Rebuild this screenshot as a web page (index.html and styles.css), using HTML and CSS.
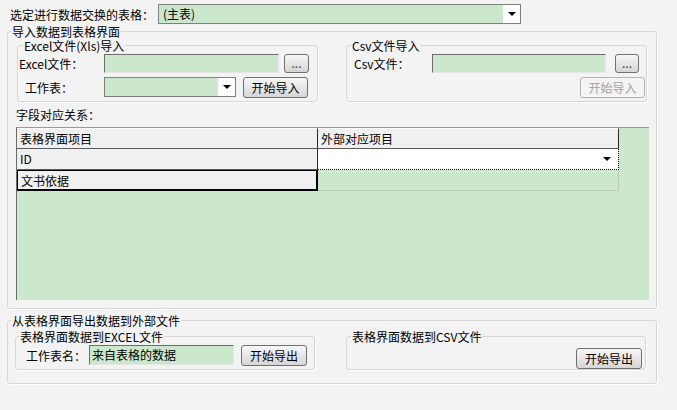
FILE: index.html
```html
<!DOCTYPE html>
<html lang="zh-CN">
<head>
  <meta charset="UTF-8" />
  <title>数据交换</title>
  <link rel="stylesheet" href="styles.css">
</head>
<body>
  <div class="top-row">
    <span class="top-label">选定进行数据交换的表格：</span>
    <div class="combo combo-main">
      <span class="combo-text">(主表)</span>
      <span class="combo-btn"><i class="arrow"></i></span>
    </div>
  </div>

  <fieldset class="group group-import">
    <legend>导入数据到表格界面</legend>
    <div class="sub-row import-row">
      <fieldset class="sub sub-excel">
        <legend>Excel文件(Xls)导入</legend>
        <div class="line">
          <span class="lbl">Excel文件：</span>
          <div class="edit edit-xls"></div>
          <button class="btn btn-dots">...</button>
        </div>
        <div class="line">
          <span class="lbl lbl-indent">工作表：</span>
          <div class="combo combo-sheet">
            <span class="combo-text"></span>
            <span class="combo-btn"><i class="arrow"></i></span>
          </div>
          <button class="btn btn-import">开始导入</button>
        </div>
      </fieldset>
      <fieldset class="sub sub-csv">
        <legend>Csv文件导入</legend>
        <div class="line">
          <span class="lbl">Csv文件：</span>
          <div class="edit edit-csv"></div>
          <button class="btn btn-dots">...</button>
        </div>
        <div class="line line-end">
          <button class="btn btn-import" disabled>开始导入</button>
        </div>
      </fieldset>
    </div>

    <div class="map-label">字段对应关系：</div>
    <div class="grid">
      <div class="cell head">表格界面项目</div>
      <div class="cell head">外部对应项目</div>
      <div class="cell fixed">ID</div>
      <div class="cell edit-cell"><i class="arrow"></i></div>
      <div class="cell fixed current">文书依据</div>
      <div class="cell plain"></div>
    </div>
  </fieldset>

  <fieldset class="group group-export">
    <legend>从表格界面导出数据到外部文件</legend>
    <div class="sub-row export-row">
      <fieldset class="sub sub-excel-out">
        <legend>表格界面数据到EXCEL文件</legend>
        <div class="line">
          <span class="lbl lbl-sheet">工作表名：</span>
          <div class="edit edit-sheet">来自表格的数据</div>
          <button class="btn btn-export">开始导出</button>
        </div>
      </fieldset>
      <fieldset class="sub sub-csv-out">
        <legend>表格界面数据到CSV文件</legend>
        <div class="line line-end">
          <button class="btn btn-export">开始导出</button>
        </div>
      </fieldset>
    </div>
  </fieldset>
</body>
</html>
```

FILE: styles.css
```css
body {
  margin: 0;
  background: #f3f3f3;
  font-family: "Noto Sans CJK SC", "Noto Sans", sans-serif;
  font-size: 12px;
  color: #000;
  width: 677px;
  height: 410px;
  overflow: hidden;
}
.top-row {
  display: flex;
  align-items: center;
  padding: 4px 0 0 10px;
  height: 20px;
}
.top-label {
  width: 148px;
}
.combo {
  display: flex;
  box-sizing: border-box;
  border: 1px solid #7f7f7f;
  background: #cbe8cc;
  height: 20px;
}
.combo-main {
  width: 363px;
}
.combo-text {
  flex: 1;
  line-height: 18px;
  padding-left: 4px;
}
.combo-btn {
  width: 17px;
  background: #fff;
  display: flex;
  align-items: center;
  justify-content: center;
}
.arrow {
  display: block;
  width: 0;
  height: 0;
  border-left: 4px solid transparent;
  border-right: 4px solid transparent;
  border-top: 4px solid #000;
}
.group, .sub {
  margin: 0;
  border: 1px solid #d6d6d6;
  border-radius: 3px;
  box-shadow: 1px 1px 0 #fff;
  min-width: 0;
}
.group legend, .sub legend {
  padding: 0 1px;
  line-height: 13px;
}
.group {
  width: 650px;
  box-sizing: border-box;
  margin-left: 7px;
  padding: 0 8px;
}
.group-import {
  margin-top: 1px;
  height: 284px;
}
.group-import > legend {
  margin-left: -5px;
}
.group-export {
  margin-top: 5px;
  height: 70px;
  padding-left: 7px;
}
.group-export > legend {
  margin-left: -4px;
}
.sub-row {
  display: flex;
  justify-content: space-between;
}
.import-row {
  margin-top: 1px;
}
.export-row {
  margin-top: 3px;
}
.sub {
  box-sizing: border-box;
  width: 301px;
  padding: 0 1px;
}
.sub-excel {
  margin: 0 0 0 1px;
  height: 63px;
}
.sub-excel > legend {
  margin-left: 4px;
}
.sub-csv {
  margin-right: 1px;
  height: 63px;
  padding: 0 2px 0 7px;
}
.sub-csv > legend {
  margin-left: -3px;
}
.line {
  display: flex;
  align-items: center;
  height: 22px;
}
.line + .line {
  margin-top: 2px;
}
.line-end {
  justify-content: flex-end;
}
.lbl {
  width: 85px;
}
.lbl-indent {
  width: 79px;
  padding-left: 6px;
}
.sub-csv .lbl {
  width: 78px;
}
.edit {
  box-sizing: border-box;
  height: 19px;
  background: #cbe8cc;
  border-top: 1px solid #6e6e6e;
  border-left: 1px solid #6e6e6e;
  border-right: 1px solid #e6e6e6;
  border-bottom: 1px solid #e6e6e6;
  line-height: 17px;
  padding-left: 2px;
}
.edit-xls {
  width: 175px;
}
.edit-csv {
  width: 174px;
}
.btn {
  box-sizing: border-box;
  font-family: inherit;
  font-size: 12px;
  color: #000;
  border: 1px solid #707070;
  border-radius: 3px;
  background: linear-gradient(#f7f7f7, #e6e6e6 50%, #d6d6d6);
  padding: 0;
  margin: 0;
}
.btn:disabled {
  color: #a3a3a3;
  border-color: #b4b4b4;
  background: #f4f4f4;
}
.btn-dots {
  width: 25px;
  height: 19px;
  margin-left: 5px;
  line-height: 12px;
  color: #444;
}
.sub-csv .btn-dots {
  margin-left: 9px;
  width: 24px;
}
.combo-sheet {
  width: 132px;
}
.btn-import {
  width: 65px;
  height: 21px;
  margin-left: 7px;
}
.sub-csv .btn-import {
  margin-right: -1px;
}
.map-label {
  margin-top: 5px;
  height: 20px;
  line-height: 16px;
}
.grid {
  display: grid;
  grid-template-columns: 301px 301px;
  grid-auto-rows: 21px;
  align-content: start;
  width: 633px;
  height: 173px;
  box-sizing: border-box;
  background: #cbe8cc;
  border-top: 1px solid #9a9a9a;
  border-left: 1px solid #6a6a6a;
}
.cell {
  box-sizing: border-box;
  line-height: 19px;
  padding-left: 3px;
}
.head, .fixed {
  background: #f0f0f0;
  border-right: 1px solid #2a2a2a;
  border-bottom: 1px solid #5a5a5a;
}
.head {
  border-top: 1px solid #fff;
}
.current {
  border: 1px solid #000;
  border-width: 1px 2px 2px 1px;
}
.edit-cell {
  background: #fff;
  border-bottom: 1px dotted #000;
  border-right: 1px dotted #000;
  display: flex;
  align-items: center;
  justify-content: flex-end;
  padding-right: 7px;
}
.plain {
  border-right: 1px solid #b9c9ba;
  border-bottom: 1px solid #b9c9ba;
}
.sub-excel-out {
  height: 40px;
  width: 300px;
  padding: 0 7px 0 10px;
}
.sub-excel-out > legend {
  margin-left: -7px;
}
.sub-csv-out {
  height: 40px;
  width: 300px;
  margin-right: 2px;
  padding: 0 3px 0 0;
}
.sub-csv-out > legend {
  margin-left: 4px;
}
.sub-excel-out .line {
  margin-top: 1px;
}
.lbl-sheet {
  width: 63px;
}
.edit-sheet {
  width: 145px;
  height: 20px;
  line-height: 18px;
}
.btn-export {
  width: 66px;
  height: 21px;
  margin-left: 7px;
}
.sub-csv-out .line {
  margin-top: 4px;
}
```
